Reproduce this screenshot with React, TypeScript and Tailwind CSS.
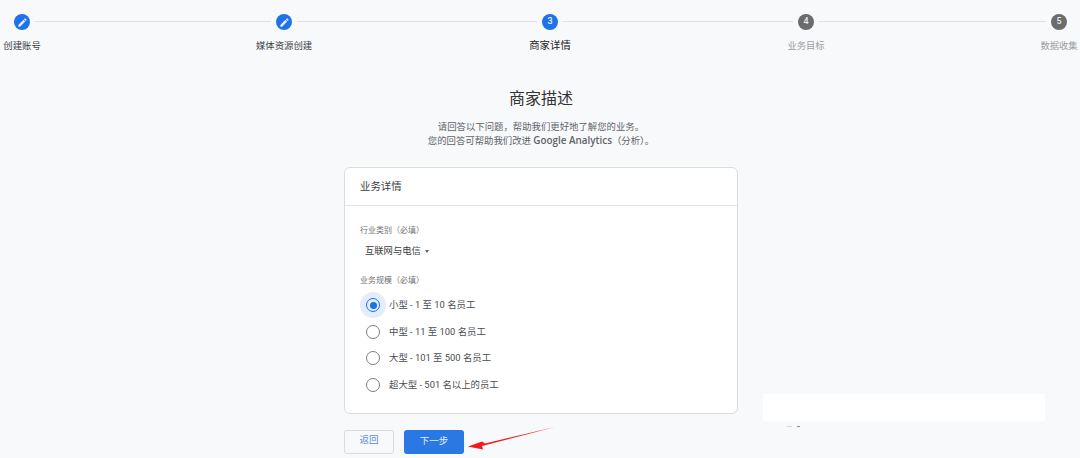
const font = "font-['Roboto','Noto_Sans_CJK_SC',sans-serif]";

const steps = [
  { label: "创建账号", state: "done", line: "w-[236px]" },
  { label: "媒体资源创建", state: "done", line: "w-[240px]" },
  { label: "商家详情", state: "current", num: 3, line: "w-[230px]" },
  { label: "业务目标", state: "todo", num: 4, line: "w-[227px]" },
  { label: "数据收集", state: "todo", num: 5, line: "" },
];

const sizes = [
  { text: "小型 - 1 至 10 名员工", checked: true },
  { text: "中型 - 11 至 100 名员工" },
  { text: "大型 - 101 至 500 名员工" },
  { text: "超大型 - 501 名以上的员工" },
];

function EditIcon() {
  return (
    <svg viewBox="0 0 24 24" className="h-[11px] w-[11px] fill-[#e8f0fe]">
      <path d="M3 17.25V21h3.75L17.81 9.94l-3.75-3.75L3 17.25zM20.71 7.04a1 1 0 0 0 0-1.41l-2.34-2.34a1 1 0 0 0-1.41 0l-1.83 1.83 3.75 3.75 1.83-1.83z" />
    </svg>
  );
}

function Stepper() {
  return (
    <div className="flex items-start pl-[14px] pt-[14px]">
      {steps.map((s) => (
        <div key={s.label} className="flex items-start">
          <div className="flex w-4 flex-col items-center">
            <div
              className={
                s.state === "todo"
                  ? "flex h-4 w-4 items-center justify-center rounded-full bg-[#6b6c6e] text-[9px] font-medium text-[#e8eaed]"
                  : "flex h-4 w-4 items-center justify-center rounded-full bg-[#1f73e8] text-[9px] font-medium text-[#e8f0fe]"
              }
            >
              {s.state === "done" ? <EditIcon /> : s.num}
            </div>
            <span
              className={
                s.state === "todo"
                  ? "mt-[9px] whitespace-nowrap text-[9.3px] leading-[14px] text-[#9a9da1]"
                  : s.state === "current"
                    ? "mt-[9px] whitespace-nowrap text-[10.4px] leading-[14px] text-[#202124]"
                    : "mt-[9px] whitespace-nowrap text-[9.4px] leading-[14px] text-[#3c4043]"
              }
            >
              {s.label}
            </span>
          </div>
          {s.line && <div className={`mx-[5px] mt-[7px] h-px bg-[#dfe1e5] ${s.line}`} />}
        </div>
      ))}
    </div>
  );
}

function Radio({ text, checked }: { text: string; checked?: boolean }) {
  return (
    <div className="flex h-[26.6px] items-center">
      <div className="flex h-[26px] w-[26px] items-center justify-center">
        {checked ? (
          <div className="flex h-[26px] w-[26px] items-center justify-center rounded-full bg-[#e3edfc]">
            <div className="flex h-[14px] w-[14px] items-center justify-center rounded-full border-[1.5px] border-[#1a73e8]">
              <div className="h-[7px] w-[7px] rounded-full bg-[#1a73e8]" />
            </div>
          </div>
        ) : (
          <div className="h-[14px] w-[14px] rounded-full border-[1.5px] border-[#7b7e82]" />
        )}
      </div>
      <span className="ml-[3px] text-[9.4px] leading-[14px] text-[#4a4d51]">{text}</span>
    </div>
  );
}

export default function App() {
  return (
    <div className={`relative h-[458px] w-[1080px] overflow-hidden bg-[#f8f9fb] ${font}`}>
      <Stepper />

      <div className="mt-[34px] flex flex-col items-center pl-[2px] text-center">
        <h1 className="text-[16px] leading-[24px] font-normal text-[#303134]">商家描述</h1>
        <p className="mt-[9px] text-[9.4px] leading-[14px] text-[#5f6368]">
          请回答以下问题，帮助我们更好地了解您的业务。
          <br />
          您的回答可帮助我们改进 <span className="font-['Open_Sans'] text-[9.9px] leading-none font-semibold">Google Analytics</span>（分析）。
        </p>
      </div>

      <div className="mt-[19px] ml-[344px] w-[394px]">
        <div className="h-[247px] rounded-[6px] border border-[#dadce0] bg-white">
          <div className="flex h-[38px] items-center border-b border-[#e3e5e8] px-[15px] text-[10.4px] text-[#3c4043]">
            业务详情
          </div>
          <div className="px-[15px] pt-[19px]">
            <div className="text-[8px] leading-[12px] text-[#6f7276]">行业类别（必填）</div>
            <div className="mt-[7px] flex items-center pl-[5px] text-[9.3px] leading-[14px] text-[#3c4043]">
              互联网与电信
              <div className="ml-[4px] h-0 w-0 border-x-[2.5px] border-t-[3px] border-x-transparent border-t-[#5f6368]" />
            </div>
            <div className="mt-[17px] text-[8px] leading-[12px] text-[#6f7276]">业务规模（必填）</div>
            <div className="mt-[5px]">
              {sizes.map((s) => (
                <Radio key={s.text} text={s.text} checked={s.checked} />
              ))}
            </div>
          </div>
        </div>

        <div className="mt-[16px] flex gap-[10px]">
          <button className="h-[24px] w-[50px] rounded-[3px] border border-[#dadce0] pb-[3px] text-[9.5px] text-[#5b8fd9]">
            返回
          </button>
          <button className="h-[24px] w-[60px] rounded-[3px] bg-[#2a78e4] pb-[2px] text-[9.5px] text-[#e8f0fe]">
            下一步
          </button>
        </div>
      </div>

      {/* red annotation arrow */}
      <svg className="absolute top-[424px] left-[465px] h-[28px] w-[95px]" viewBox="0 0 95 28">
        <path d="M90 3 L20 19.5 L17 17.5 L3 22.5 L18 25.5 L17 22 Z" fill="#f3191c" />
      </svg>

      {/* white patch covering part of the shot, with the cut-off text under it */}
      <div className="absolute top-[394px] left-[763px] h-[27px] w-[282px] bg-white" />
      <div className="absolute top-[426px] left-[787px] h-px w-[5px] bg-[#d5d7da]" />
      <div className="absolute top-[426px] left-[797px] h-px w-[3px] bg-[#8a8d91]" />
    </div>
  );
}
